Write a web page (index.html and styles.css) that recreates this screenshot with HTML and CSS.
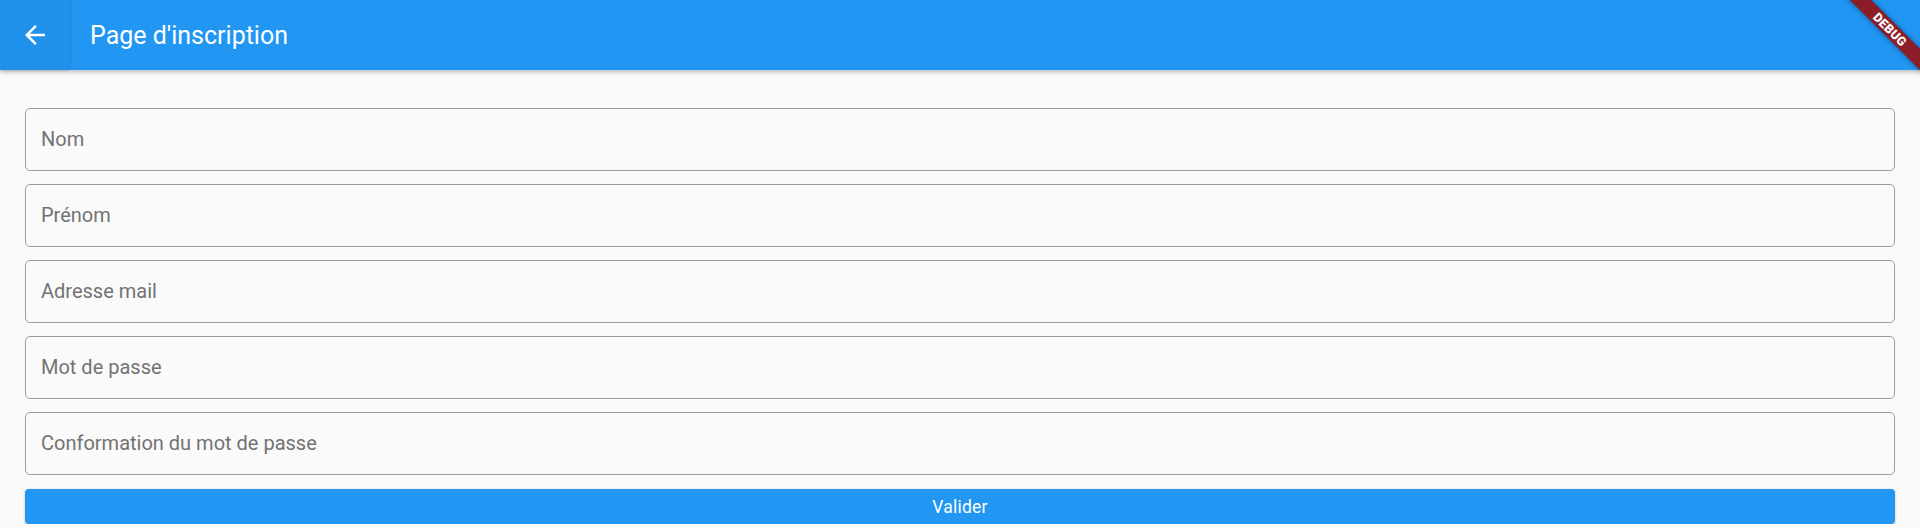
FILE: index.html
```html
<!DOCTYPE html>
<html lang="fr">
<head>
<meta charset="utf-8">
<title>Page d'inscription</title>
<link rel="stylesheet" href="styles.css">
</head>
<body>
<header class="appbar">
  <button class="back" aria-label="Retour">
    <svg viewBox="0 0 24 24" width="30" height="30"><path fill="#fff" d="M20 11H7.83l5.59-5.59L12 4l-8 8 8 8 1.41-1.41L7.83 13H20v-2z"/></svg>
  </button>
  <h1 class="title">Page d'inscription</h1>
</header>
<main class="form">
  <div class="field"><span class="hint">Nom</span></div>
  <div class="field"><span class="hint">Prénom</span></div>
  <div class="field"><span class="hint">Adresse mail</span></div>
  <div class="field"><span class="hint">Mot de passe</span></div>
  <div class="field"><span class="hint">Conformation du mot de passe</span></div>
  <button class="submit">Valider</button>
</main>
<div class="banner-wrap"><div class="banner">DEBUG</div></div>
</body>
</html>
```
FILE: styles.css
```css
* { box-sizing: border-box; }
html, body {
  margin: 0;
  padding: 0;
  background: #fafafa;
  font-family: Roboto, "Liberation Sans", sans-serif;
  overflow: hidden;
}
.appbar {
  height: 70px;
  background: #2196f3;
  display: flex;
  align-items: center;
  box-shadow: 0 2px 5px rgba(0,0,0,0.25);
  position: relative;
  z-index: 1;
}
.back {
  width: 70px;
  height: 70px;
  border: none;
  margin: 0;
  padding: 0;
  background: rgba(0,0,0,0.03);
  border-radius: 0 0 5px 0;
  box-shadow: 0.5px 0.5px 2px rgba(0,0,0,0.12);
  display: flex;
  align-items: center;
  justify-content: center;
}
.title {
  margin: 0 0 0 20px;
  color: #fff;
  font-size: 25px;
  font-weight: 400;
  letter-spacing: 0;
}
.form {
  padding: 38px 25px 0 25px;
  display: flex;
  flex-direction: column;
  gap: 13px;
}
.field {
  height: 63px;
  border: 1.25px solid #9e9e9e;
  border-radius: 5px;
  display: flex;
  align-items: center;
  padding: 0 0 2px 15px;
}
.hint {
  font-size: 20px;
  color: #737373;
}
.submit {
  margin-top: 1px;
  height: 35px;
  border: none;
  border-radius: 4px;
  background: #2196f3;
  color: #fff;
  font-family: Roboto, "Liberation Sans", sans-serif;
  font-size: 17.5px;
  font-weight: 400;
  letter-spacing: 0.2px;
  box-shadow: 0 1px 3px rgba(0,0,0,0.25);
}
.banner-wrap {
  position: absolute;
  top: 0;
  right: 0;
  width: 100px;
  height: 100px;
  overflow: hidden;
  z-index: 5;
  pointer-events: none;
}
.banner {
  position: absolute;
  top: 22px;
  right: -30px;
  width: 120px;
  height: 15px;
  transform: rotate(45deg);
  background: #8c1c26;
  box-shadow: 0 0 5px rgba(0,0,0,0.5);
  color: #fff;
  font-family: Roboto, "Liberation Sans", sans-serif;
  font-weight: 900;
  font-size: 12.5px;
  line-height: 15px;
  text-align: center;
  letter-spacing: 0.3px;
}
```
